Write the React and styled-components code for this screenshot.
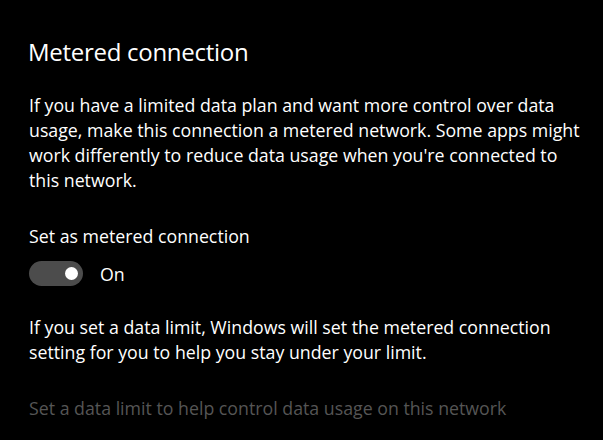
import React, { useState } from "react";
import styled, { createGlobalStyle } from "styled-components";

const GlobalStyle = createGlobalStyle`
  html, body {
    margin: 0;
    background: #000;
  }
  body {
    font-family: "Open Sans", "Noto Sans", sans-serif;
    color: #fff;
  }
`;

const Page = styled.div`
  width: 603px;
  height: 440px;
  box-sizing: border-box;
  padding: 35.7px 29px 0 29px;
  display: flex;
  flex-direction: column;
  overflow: hidden;
`;

const Title = styled.h2`
  margin: 0;
  font-size: 24px;
  line-height: 32px;
  font-weight: 400;
  letter-spacing: -0.28px;
  margin-left: -1px;
`;

const Text = styled.p`
  margin: ${(p) => p.$gap}px 0 0;
  font-size: 17.75px;
  line-height: 25px;
  width: 562px;
  color: ${(p) => (p.$disabled ? "#555" : "#fff")};
`;

const ToggleRow = styled.div`
  margin-top: 11.1px;
  display: flex;
  align-items: center;
  gap: 17px;
`;

const Track = styled.button`
  width: 54px;
  height: 25px;
  box-sizing: border-box;
  padding: 0 5px;
  border: none;
  border-radius: 13px;
  background: #4c4c4c;
  display: flex;
  align-items: center;
  justify-content: ${(p) => (p.$on ? "flex-end" : "flex-start")};
  cursor: pointer;
`;

const Thumb = styled.span`
  width: 13px;
  height: 13px;
  border-radius: 50%;
  background: #fff;
`;

const State = styled.span`
  font-size: 17.75px;
  line-height: 25px;
  padding-top: 2px;
`;

export default function App() {
  const [on, setOn] = useState(true);

  return (
    <>
      <GlobalStyle />
      <Page>
        <Title>Metered connection</Title>
        <Text $gap={25.6}>
          If you have a limited data plan and want more control over data
          usage, make this connection a metered network. Some apps might work
          differently to reduce data usage when you're connected to this
          network.
        </Text>
        <Text $gap={30.6}>Set as metered connection</Text>
        <ToggleRow>
          <Track $on={on} onClick={() => setOn(!on)}>
            <Thumb />
          </Track>
          <State>{on ? "On" : "Off"}</State>
        </ToggleRow>
        <Text $gap={28.3}>
          If you set a data limit, Windows will set the metered connection
          setting for you to help you stay under your limit.
        </Text>
        <Text $gap={30.6} $disabled>
          Set a data limit to help control data usage on this network
        </Text>
      </Page>
    </>
  );
}
